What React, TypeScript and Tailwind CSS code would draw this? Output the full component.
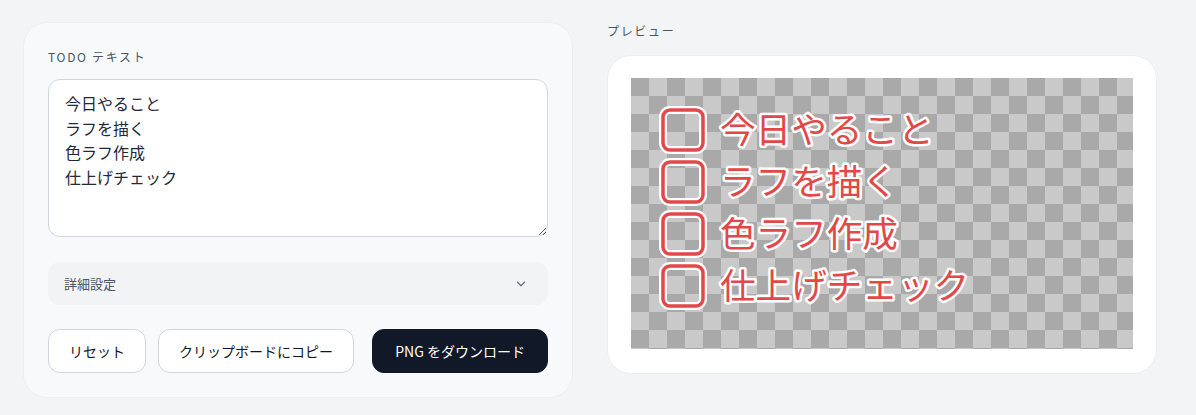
import { useState } from 'react';
import { ChevronDown } from 'lucide-react';

const DEFAULT_TEXT = '今日やること\nラフを描く\n色ラフ作成\n仕上げチェック';

function PreviewCanvas({ lines }: { lines: string[] }) {
  return (
    <svg width={502} height={271} viewBox="0 0 502 271" className="block">
      <defs>
        <pattern id="checker" width="36" height="36" patternUnits="userSpaceOnUse">
          <rect width="36" height="36" fill="#c9c9c9" />
          <rect width="18" height="18" fill="#a9a9a9" />
          <rect x="18" y="18" width="18" height="18" fill="#a9a9a9" />
        </pattern>
      </defs>
      <rect width="502" height="271" fill="url(#checker)" />
      {lines.map((line, i) => {
        const top = 32 + i * 52;
        return (
          <g key={i}>
            <rect x={32} y={top} width={40} height={40} rx={7} fill="none" stroke="#ffffff" strokeWidth={8} />
            <rect x={32} y={top} width={40} height={40} rx={7} fill="none" stroke="#e24848" strokeWidth={3.5} />
            <text
              x={89}
              y={top + 33}
              fontSize={35.6}
              fontWeight={400}
              fill="#e24848"
              stroke="#ffffff"
              strokeWidth={5}
              strokeLinejoin="round"
              paintOrder="stroke"
              fontFamily="'Noto Sans CJK JP', sans-serif"
            >
              {line}
            </text>
          </g>
        );
      })}
    </svg>
  );
}

export default function App() {
  const [text, setText] = useState(DEFAULT_TEXT);
  const lines = text.split('\n').filter((l) => l.trim() !== '');

  return (
    <div className="min-h-screen bg-[#f3f4f6] font-['Noto_Sans_CJK_JP',sans-serif] text-gray-900">
      <div className="grid grid-cols-[550px_550px] gap-[34px] px-[23px] pt-[22px] pb-[18px]">
        {/* Editor */}
        <div className="rounded-3xl border border-[#eceef1] bg-[#f8f9fb] px-6 pt-6 pb-6">
          <label className="block text-xs leading-5 tracking-[0.14em] text-gray-600">TODO テキスト</label>
          <textarea
            value={text}
            onChange={(e) => setText(e.target.value)}
            className="mt-3 block h-[158px] w-full resize-y rounded-xl border border-gray-300 bg-white px-4 py-[11px] text-base leading-[24.7px] text-gray-800 outline-none"
          />

          <button className="mt-[25px] flex h-[43px] w-full items-center justify-between rounded-xl bg-[#f2f3f5] px-4 text-[13px] text-gray-600">
            <span>詳細設定</span>
            <ChevronDown className="mr-1 h-3.5 w-3.5 text-gray-500" strokeWidth={2.25} />
          </button>

          <div className="mt-6 flex items-center gap-3">
            <button className="h-11 rounded-xl border border-gray-300 bg-white px-5 text-sm text-gray-900">
              リセット
            </button>
            <button className="h-11 rounded-xl border border-gray-300 bg-white px-5 text-sm text-gray-900">
              クリップボードにコピー
            </button>
            <button className="ml-auto h-11 rounded-xl border border-[#111827] bg-[#111827] px-[22px] text-sm text-white">
              PNG をダウンロード
            </button>
          </div>
        </div>

        {/* Preview */}
        <div>
          <div className="text-xs leading-[18px] tracking-[0.14em] text-gray-600">プレビュー</div>
          <div className="mt-[15px] rounded-3xl border border-[#eceef1] bg-white px-[23px] pt-[22px] pb-6">
            <PreviewCanvas lines={lines} />
          </div>
        </div>
      </div>
    </div>
  );
}
